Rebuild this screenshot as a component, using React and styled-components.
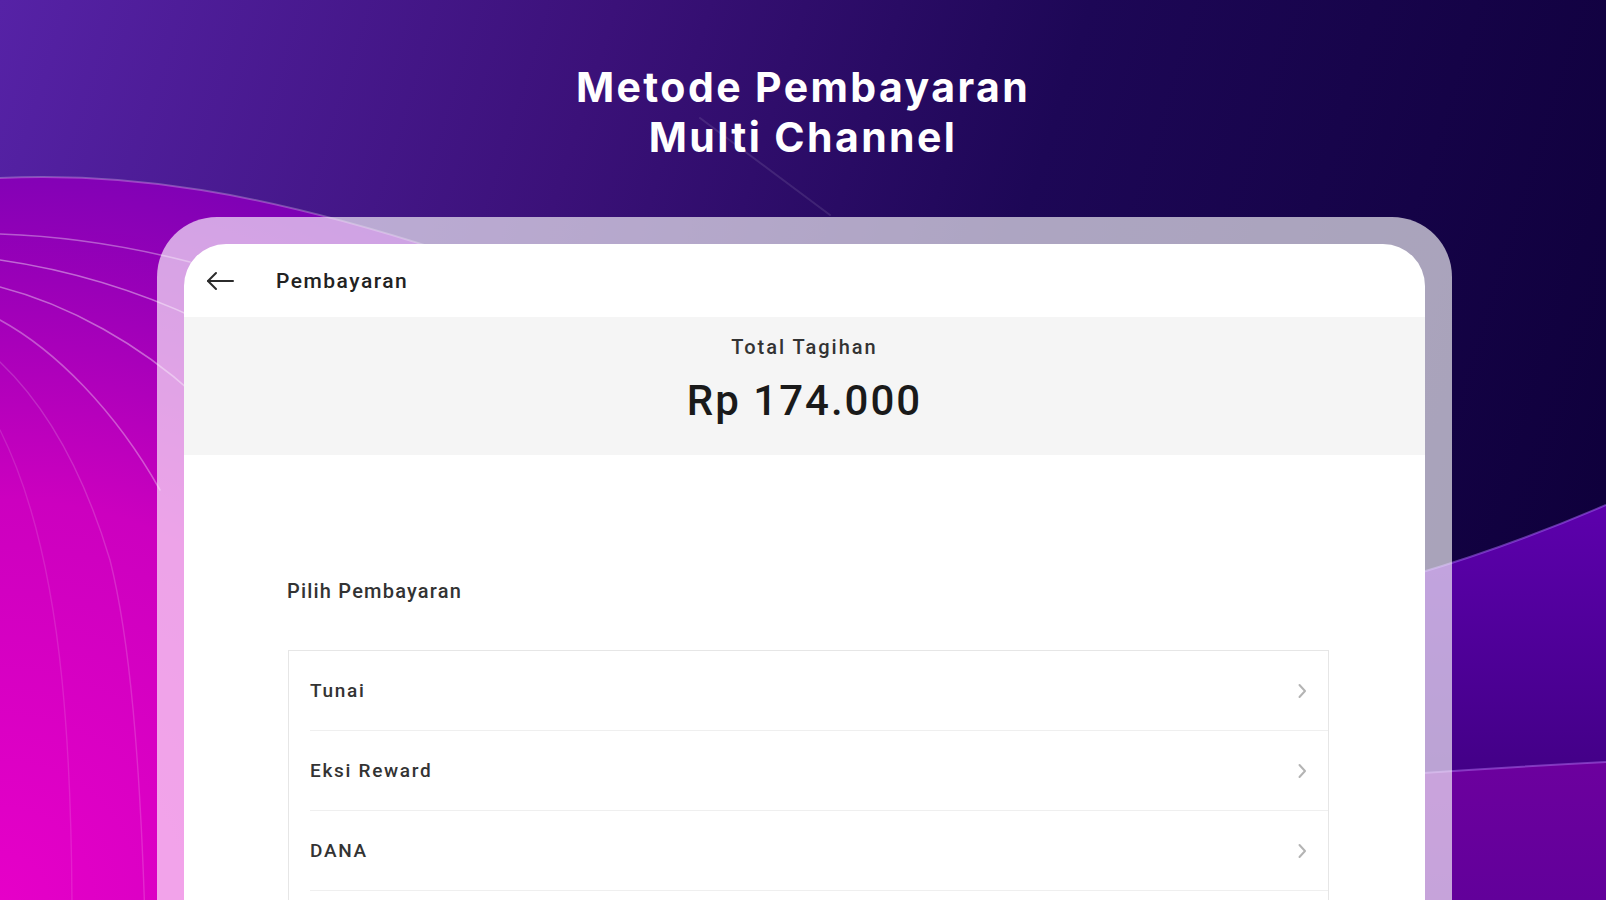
import React from "react";
import styled, { createGlobalStyle } from "styled-components";

const GlobalStyle = createGlobalStyle`
  html, body, #root {
    margin: 0;
    padding: 0;
    width: 100%;
    height: 100%;
  }
  body {
    font-family: Roboto, "Liberation Sans", sans-serif;
    background: #100038;
    overflow: hidden;
  }
  * {
    box-sizing: border-box;
  }
`;

const paymentMethods = ["Tunai", "Eksi Reward", "DANA"];

const Backdrop = () => (
  <BackdropSvg viewBox="0 0 1606 900" preserveAspectRatio="none">
    <defs>
      <linearGradient id="base" x1="0" y1="0" x2="1606" y2="500" gradientUnits="userSpaceOnUse">
        <stop offset="0" stop-color="#5622a6" />
        <stop offset="0.35" stop-color="#3b1179" />
        <stop offset="0.62" stop-color="#1d0756" />
        <stop offset="1" stop-color="#0f003c" />
      </linearGradient>
      <radialGradient id="magenta" cx="0" cy="900" r="1000" gradientUnits="userSpaceOnUse">
        <stop offset="0" stop-color="#e600c8" />
        <stop offset="0.4" stop-color="#cc00bf" />
        <stop offset="0.62" stop-color="#9a00b8" />
        <stop offset="0.78" stop-color="#7a00b6" stop-opacity="0.95" />
        <stop offset="1" stop-color="#5a10a0" stop-opacity="0" />
      </radialGradient>
      <linearGradient id="waveA" x1="0" y1="500" x2="0" y2="780" gradientUnits="userSpaceOnUse">
        <stop offset="0" stop-color="#5d00ad" />
        <stop offset="1" stop-color="#420086" />
      </linearGradient>
      <linearGradient id="waveB" x1="0" y1="760" x2="0" y2="900" gradientUnits="userSpaceOnUse">
        <stop offset="0" stop-color="#6c009e" />
        <stop offset="1" stop-color="#62009a" />
      </linearGradient>
    </defs>
    <rect width="1606" height="900" fill="url(#base)" />
    <path d="M0 178 C 130 172, 260 192, 440 250 L 560 300 L 560 900 L 0 900 Z" fill="url(#magenta)" />
    <g fill="none" stroke="#ffffff" strokeLinecap="round">
      <path d="M0 178 C 130 172, 260 192, 440 250" strokeOpacity="0.26" strokeWidth="2" />
      <path d="M0 234 C 60 236, 120 244, 190 262" strokeOpacity="0.35" strokeWidth="1.6" />
      <path d="M0 260 C 70 270, 140 292, 200 320" strokeOpacity="0.4" strokeWidth="1.6" />
      <path d="M0 287 C 70 305, 140 345, 195 395" strokeOpacity="0.38" strokeWidth="1.6" />
      <path d="M0 320 C 55 350, 115 410, 160 490" strokeOpacity="0.33" strokeWidth="1.6" />
      <path d="M0 362 C 40 400, 80 460, 110 560 C 130 640, 140 760, 145 920" strokeOpacity="0.16" strokeWidth="1.4" />
      <path d="M0 430 C 25 480, 50 560, 62 680 C 70 760, 72 840, 72 920" strokeOpacity="0.12" strokeWidth="1.4" />
      <path d="M700 118 L 830 215" strokeOpacity="0.1" strokeWidth="2" />
    </g>
    <path d="M1300 604 Q 1455 570, 1606 505 L 1606 900 L 1300 900 Z" fill="url(#waveA)" />
    <path d="M1300 604 Q 1455 570, 1606 505" fill="none" stroke="#a060f0" strokeOpacity="0.55" strokeWidth="2" />
    <path d="M1300 782 Q 1450 770, 1606 762 L 1606 900 L 1300 900 Z" fill="url(#waveB)" />
    <path d="M1300 782 Q 1450 770, 1606 762" fill="none" stroke="#b070f0" strokeOpacity="0.5" strokeWidth="2" />
  </BackdropSvg>
);

const BackArrow = () => (
  <svg width="28" height="22" viewBox="0 0 28 22" fill="none" stroke="#2b2b2b" strokeWidth="2" strokeLinecap="round" strokeLinejoin="round">
    <path d="M27 11 H2" />
    <path d="M10 3 L2 11 L10 19" />
  </svg>
);

const Chevron = () => (
  <svg width="10" height="16" viewBox="0 0 10 16" fill="none" stroke="#b4b4b4" strokeWidth="2" strokeLinecap="round" strokeLinejoin="round">
    <path d="M2.5 2 L8 8 L2.5 14" />
  </svg>
);

const App = () => {
  return (
    <>
      <GlobalStyle />
      <Stage>
        <Backdrop />
        <Content>
          <Title>
            Metode Pembayaran
            <br />
            Multi Channel
          </Title>
          <TabletFrame>
            <Screen>
              <AppBar>
                <BackArrow />
                <AppBarTitle>Pembayaran</AppBarTitle>
              </AppBar>
              <Summary>
                <SummaryLabel>Total Tagihan</SummaryLabel>
                <SummaryAmount>Rp 174.000</SummaryAmount>
              </Summary>
              <Body>
                <SectionLabel>Pilih Pembayaran</SectionLabel>
                <MethodList>
                  {paymentMethods.map((method) => (
                    <MethodRow key={method}>
                      <MethodInner>
                        <MethodName>{method}</MethodName>
                        <Chevron />
                      </MethodInner>
                    </MethodRow>
                  ))}
                </MethodList>
              </Body>
            </Screen>
          </TabletFrame>
        </Content>
      </Stage>
    </>
  );
};

const Stage = styled.div`
  position: relative;
  width: 1606px;
  height: 900px;
  overflow: hidden;
  background: #100038;
`;

const BackdropSvg = styled.svg`
  position: absolute;
  inset: 0;
  width: 100%;
  height: 100%;
  display: block;
`;

const Content = styled.div`
  position: relative;
  z-index: 1;
  display: flex;
  flex-direction: column;
  align-items: center;
`;

const Title = styled.h1`
  margin: 62px 0 0;
  font-family: Inter, "Open Sans", sans-serif;
  font-size: 41px;
  line-height: 50px;
  font-weight: 700;
  color: #ffffff;
  text-align: center;
  letter-spacing: 2.4px;
`;

const TabletFrame = styled.div`
  margin: 55px 0 0 3px;
  width: 1295px;
  height: 720px;
  padding: 27px 27px 0;
  border-radius: 60px 60px 0 0;
  background: rgba(255, 255, 255, 0.64);
`;

const Screen = styled.div`
  height: 100%;
  background: #ffffff;
  border-radius: 42px 42px 0 0;
  overflow: hidden;
`;

const AppBar = styled.div`
  height: 73px;
  display: flex;
  align-items: center;
  gap: 42px;
  padding: 0 0 0 22px;
`;

const AppBarTitle = styled.span`
  font-size: 21px;
  font-weight: 500;
  color: #222222;
  letter-spacing: 1.5px;
`;

const Summary = styled.div`
  height: 138px;
  background: #f5f5f5;
  display: flex;
  flex-direction: column;
  align-items: center;
  padding-top: 18px;
`;

const SummaryLabel = styled.div`
  font-size: 20px;
  line-height: 24px;
  font-weight: 500;
  color: #333333;
  letter-spacing: 2px;
`;

const SummaryAmount = styled.div`
  margin-top: 18px;
  font-size: 42px;
  line-height: 48px;
  font-weight: 500;
  color: #1a1a1a;
  letter-spacing: 2px;
`;

const Body = styled.div`
  padding: 124px 0 0 103px;
`;

const SectionLabel = styled.div`
  font-size: 20px;
  line-height: 24px;
  font-weight: 500;
  color: #333333;
  letter-spacing: 1.2px;
`;

const MethodList = styled.div`
  margin: 47px 0 0 1px;
  width: 1041px;
  height: 320px;
  border: 1px solid #e6e6e6;
  border-bottom: none;
  background: #ffffff;
`;

const MethodRow = styled.div`
  padding-left: 21px;
`;

const MethodInner = styled.div`
  height: 80px;
  display: flex;
  align-items: center;
  justify-content: space-between;
  padding-right: 21px;
  border-bottom: 1px solid #efefef;
`;

const MethodName = styled.span`
  font-size: 19px;
  font-weight: 500;
  color: #333333;
  letter-spacing: 1.7px;
`;

export default App;
